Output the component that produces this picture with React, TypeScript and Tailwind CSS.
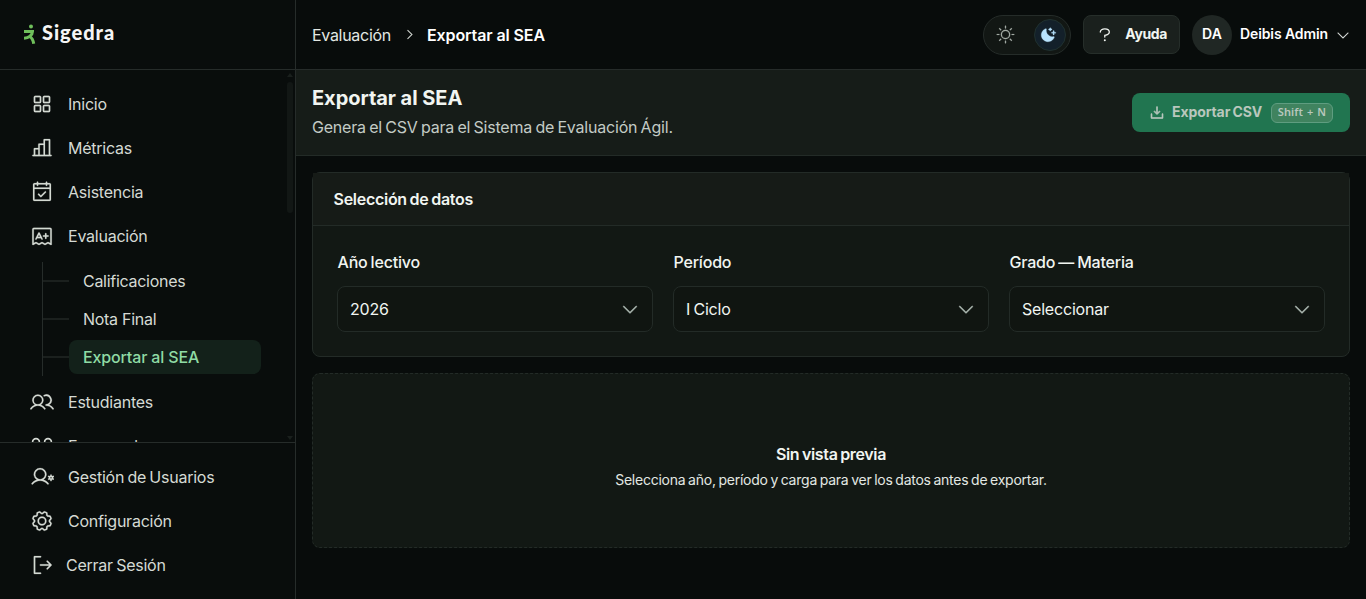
import type { ReactNode } from 'react';
import {
  PiSquaresFour, PiChartBar, PiCalendarCheck, PiExam, PiUsers, PiUserGear, PiGear, PiSignOut,
  PiSun, PiMoonStarsFill, PiCaretDown, PiCaretRight, PiDownloadSimple,
} from 'react-icons/pi';

function NavItem({ icon, children, className = 'gap-[14px]' }: { icon: ReactNode; children: ReactNode; className?: string }) {
  return (
    <a className={`flex h-11 shrink-0 items-center pl-[30px] text-[16px] tracking-[-0.24px] [word-spacing:-1px] text-[#d5dad4] ${className}`}>
      <span className="text-[24px] [&_svg]:stroke-[2]">{icon}</span>
      <span className="whitespace-nowrap">{children}</span>
    </a>
  );
}

function PairIcon() {
  return (
    <svg width="24" height="24" viewBox="0 0 24 24" fill="none" stroke="currentColor" strokeLinecap="round">
      <circle cx="6" cy="8" r="3.400" />
      <circle cx="18" cy="8" r="3.400" />
      <path d="M1.500 18c1-3 2.500-4.500 4.500-4.500s3.500 1.500 4.500 4.500M13.500 18c1-3 2.500-4.500 4.500-4.500s3.500 1.500 4.500 4.500" />
    </svg>
  );
}

function SubItem({ children, active = false }: { children: ReactNode; active?: boolean }) {
  return (
    <div className="flex h-[38px] items-center">
      <span className="h-[2px] w-[26px] bg-[#1b201e]" />
      <span
        className={
          active
            ? 'flex h-[34px] w-[192px] items-center rounded-lg bg-[#13211a] pl-[14px] font-medium tracking-[-0.15px] text-[#8fdba4]'
            : 'flex h-[34px] w-[192px] items-center pl-[14px] text-[#d5dad4]'
        }
      >
        {children}
      </span>
    </div>
  );
}

function Field({ label, value }: { label: ReactNode; value: ReactNode }) {
  return (
    <div className="flex flex-1 flex-col tracking-[-0.2px] [word-spacing:-1px]">
      <label className="h-6 pl-[0.5px] text-[16px] leading-6 font-medium text-[#f1f5f1]">{label}</label>
      <div className="mt-3 flex h-[46px] items-center justify-between rounded-lg border border-[#232b27] bg-[#101511] pr-3 pl-3 text-[16px] text-[#f1f5f1]">
        <span>{value}</span>
        <PiCaretDown className="stroke-[3] text-[20px] text-[#a9b5ae]" />
      </div>
    </div>
  );
}

export default function App() {
  return (
    <div className="flex h-[599px] w-[1366px] overflow-hidden bg-[#080c0b] font-['Inter',sans-serif] text-[#f1f5f1]">
      <aside className="flex w-[296px] shrink-0 flex-col border-r border-[#262c2a] bg-[#090d0c]">
        <div className="flex h-[70px] shrink-0 items-start border-b border-[#262c2a] pt-[22px] pl-[24px]">
          <svg className="mt-[2px]" width="12" height="20" viewBox="0 0 12 20" fill="none" stroke="#6fbf5b" strokeWidth="3">
            <circle cx="7" cy="2.600" r="2" fill="#6fbf5b" stroke="none" />
            <path d="M0 7.600h8.500C8.500 9.800 7.500 11 6 12.200 4.200 13.500 2.500 14 0 14.200" />
            <path d="M5.400 12.200c2.200 1.200 3.800 3.800 4.300 7.600" />
          </svg>
          <span className="ml-[6px] text-[20px] leading-[20px] font-black tracking-[0.95px] font-['Lato',sans-serif] text-[#f5f5f5]">Sigedra</span>
        </div>
        <div className="flex h-[372px] shrink-0 overflow-hidden">
          <nav className="flex flex-1 flex-col pt-3">
            <NavItem icon={<PiSquaresFour />}>Inicio</NavItem>
            <NavItem icon={<PiChartBar />}>Métricas</NavItem>
            <NavItem icon={<PiCalendarCheck />}>Asistencia</NavItem>
            <NavItem icon={<PiExam />}>Evaluación</NavItem>
            <div className="mt-1 mb-[4px] ml-[42px] h-[114px] shrink-0 border-l border-[#262c2a] text-[16px] tracking-[-0.28px]">
              <SubItem>Calificaciones</SubItem>
              <SubItem>Nota Final</SubItem>
              <SubItem active>Exportar al SEA</SubItem>
            </div>
            <NavItem icon={<PiUsers />} className="gap-[14px] tracking-[-0.1px]">Estudiantes</NavItem>
            <NavItem icon={<PairIcon />} className="gap-[14px] [&_svg]:stroke-[1.6]!">Encargados</NavItem>
          </nav>
          <div className="flex w-[10px] flex-col items-center pt-[3px] pb-[2px]">
            <svg width="6" height="4" viewBox="0 0 6 4"><path d="M3 0l3 4H0z" fill="#1a201d" /></svg>
            <div className="mt-[5px] h-[131px] w-[6px] rounded-full bg-[#121715]" />
            <svg className="mt-auto" width="6" height="4" viewBox="0 0 6 4"><path d="M3 4L0 0h6z" fill="#1a201d" /></svg>
          </div>
        </div>
        <div className="flex flex-1 flex-col border-t border-[#262c2a] pt-3">
          <NavItem icon={<PiUserGear />}>Gestión de Usuarios</NavItem>
          <NavItem icon={<PiGear />}>Configuración</NavItem>
          <NavItem icon={<PiSignOut />} className="gap-[12px]">Cerrar Sesión</NavItem>
        </div>
      </aside>

      <main className="flex flex-1 flex-col">
        <header className="flex h-[70px] shrink-0 items-center border-b border-[#262c2a] bg-[#080c0b] pr-[15px] pl-4">
          <div className="flex items-center text-[16px]">
            <span className="tracking-[-0.3px] text-[#e3e8e3]">Evaluación</span>
            <PiCaretRight className="mr-[11px] ml-[12px] stroke-[8] text-[13px] text-[#d5dad4]" />
            <span className="font-semibold tracking-[-0.1px] text-white">Exportar al SEA</span>
          </div>
          <div className="ml-auto flex items-center">
            <div className="flex h-10 w-[88px] items-center justify-between rounded-full border border-[#252c29] bg-[#121714] pr-1 pl-3">
              <PiSun className="stroke-[2] text-[19px] text-[#a3aba5]" />
              <span className="flex size-8 items-center justify-center rounded-full border border-[#20312f] bg-[#13202a]">
                <PiMoonStarsFill className="mr-[3px] stroke-[4] text-[18px] text-[#b8e3fd]" />
              </span>
            </div>
            <div className="ml-3 flex h-[39px] w-[97px] items-center justify-between rounded-lg border border-[#262e2a] bg-[#1a201d] pr-3 pl-[15px]">
              <svg width="12" height="14" viewBox="0 0 12 14" fill="none" stroke="#f1f5f1" strokeWidth="1.300" strokeLinecap="round">
                <path d="M1.300 4C1.300 2 3.300.9 5.800.9S10.300 2.200 10.300 4.100c0 2.200-2.700 3-4.500 3.300v1.700" />
                <circle cx="5.800" cy="12.300" r="1" fill="#f1f5f1" stroke="none" />
              </svg>
              <span className="mb-[2px] text-[14px] font-bold tracking-[-0.4px]">Ayuda</span>
            </div>
            <span className="ml-3 flex size-10 items-center justify-center rounded-full bg-[#202724] pb-[2px] text-[14px] font-semibold text-white">DA</span>
            <span className="mb-[2px] ml-2 text-[14px] font-semibold tracking-[-0.1px] text-white">Deibis Admin</span>
            <PiCaretDown className="ml-[7px] stroke-[2] text-[16px] text-[#e3e8e3]" />
          </div>
        </header>

        <section className="flex h-[86px] shrink-0 items-center justify-between border-b border-[#232b27] bg-[#161c18] px-4">
          <div className="flex flex-col pb-[2px]">
            <h1 className="text-[20px] leading-[28px] font-bold tracking-[-0.05px]">Exportar al SEA</h1>
            <p className="mt-[3px] text-[16px] leading-6 tracking-[-0.2px] [word-spacing:-1px] text-[#c3cbc5]">Genera el CSV para el Sistema de Evaluación Ágil.</p>
          </div>
          <button className="flex h-[39px] w-[218px] items-center rounded-lg bg-[#217550] pl-[17px] text-[#b9c7bd]">
            <PiDownloadSimple className="stroke-[10] text-[16px]" />
            <span className="mb-[2px] ml-[7px] w-[92px] text-left text-[14px] font-bold tracking-[-0.1px] whitespace-nowrap [word-spacing:-1px]">Exportar CSV</span>
            <kbd className="ml-[7px] flex h-5 w-[62px] items-center justify-center rounded-md border border-[#5f9d80] bg-[#40835f] font-['Noto_Sans',sans-serif] text-[11px] font-semibold tracking-[0.1px] [word-spacing:1px]">Shift + N</kbd>
          </button>
        </section>

        <div className="flex flex-1 flex-col gap-4 p-4">
          <section className="flex h-[185px] flex-col rounded-lg border border-[#232b27] bg-[#121814]">
            <div className="flex h-[53px] items-center border-b border-[#232b27] bg-[#161b17] pl-[20.5px]">
              <h2 className="text-[16px] font-semibold tracking-[-0.28px] [word-spacing:-1px]">Selección de datos</h2>
            </div>
            <div className="flex gap-5 px-6 pt-6">
              <Field label="Año lectivo" value="2026" />
              <Field label="Período" value="I Ciclo" />
              <Field label="Grado — Materia" value="Seleccionar" />
            </div>
          </section>
          <section className="flex h-[175px] flex-col items-center rounded-lg border border-dashed border-[#232b27] bg-[#121814] pt-[68px]">
            <h3 className="text-[16px] leading-6 font-semibold tracking-[-0.35px] [word-spacing:-1px]">Sin vista previa</h3>
            <p className="mt-1 text-[14px] leading-5 tracking-[-0.24px] [word-spacing:-1px] text-[#e3e8e3]">Selecciona año, período y carga para ver los datos antes de exportar.</p>
          </section>
        </div>
      </main>
    </div>
  );
}
